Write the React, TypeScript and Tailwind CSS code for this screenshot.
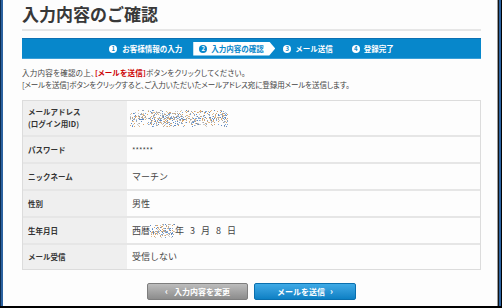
import React from 'react';

// deterministic noise used for the blurred-out personal data
const makeNoise = (w: number, h: number, seed: number) => {
  const colors = ['#7fa6d6', '#d9a46a', '#a7a7a7', '#c9c9c9', '#5f88c0', '#e0b98a'];
  const dots: { x: number; y: number; c: string }[] = [];
  let s = seed;
  const rnd = () => {
    s = (s * 1103515245 + 12345) % 2147483648;
    return s / 2147483648;
  };
  for (let y = 0; y < h; y++) {
    for (let x = 0; x < w; x++) {
      // denser in the middle band, thinner at the edges
      const edge = Math.min(y, h - 1 - y) / (h / 2);
      if (rnd() < 0.18 + edge * 0.32) {
        dots.push({ x, y, c: colors[Math.floor(rnd() * colors.length)] });
      }
    }
  }
  return dots;
};

const Noise: React.FC<{ w: number; h: number; seed: number }> = ({ w, h, seed }) => {
  const dots = makeNoise(w, h, seed);
  return (
    <svg width={w} height={h} viewBox={`0 0 ${w} ${h}`} className="shrink-0">
      {dots.map((d, i) => (
        <rect key={i} x={d.x} y={d.y} width="1" height="1" fill={d.c} />
      ))}
    </svg>
  );
};

const StepNum: React.FC<{ n: number; active?: boolean }> = ({ n, active }) => (
  <span
    className={`w-[8px] h-[8px] rounded-full flex items-center justify-center text-[6px] leading-none font-bold shrink-0 ${
      active ? 'bg-[#0787cb] text-white' : 'bg-white text-[#0787cb]'
    }`}
  >
    {n}
  </span>
);

// heights include the 2px separator line on top
const rows = [
  { label: ['メールアドレス', '(ログイン用ID)'], h: 'h-[34px]', value: 'email' },
  { label: ['パスワード'], h: 'h-[27px]', value: '******' },
  { label: ['ニックネーム'], h: 'h-[27px]', value: 'マーチン' },
  { label: ['性別'], h: 'h-[27px]', value: '男性' },
  { label: ['生年月日'], h: 'h-[27px]', value: 'birth' },
  { label: ['メール受信'], h: 'h-[26px]', value: '受信しない' },
];

export default function App() {
  return (
    <div className="w-[502px] h-[308px] bg-black flex flex-col font-['Noto_Sans_CJK_JP','Noto_Sans',sans-serif] text-[#333]">
      <div className="flex flex-1 min-h-0">
        {/* window frame, left */}
        <div className="w-px bg-[#0e2c50]" />
        <div className="w-[2px] bg-[#2b62a0]" />

        <main className="flex-1 bg-[#fdfdfd] pl-[19px] pr-[16px] flex flex-col">
          {/* Title */}
          <h1 className="mt-[5px] text-[17px] leading-[17px] font-bold text-[#383838]">入力内容のご確認</h1>
          <div className="mt-[7px] h-[2px] bg-[#e6e6e6]" />

          {/* Steps */}
          <div className="mt-[7px] h-[21px] bg-[#0787cb] border-t border-[#0b70b3] border-b border-b-[#3a9fd8] flex items-center justify-center text-white text-[7.5px] font-bold leading-none">
            <div className="flex items-center gap-[5px]">
              <StepNum n={1} />
              <span>お客様情報の入力</span>
            </div>
            <div className="ml-[11px] h-[14px] w-[82px] bg-white text-[#0787cb] flex items-center gap-[4px] pl-[6px] [clip-path:polygon(0_0,calc(100%_-_6px)_0,100%_50%,calc(100%_-_6px)_100%,0_100%)]">
              <StepNum n={2} active />
              <span>入力内容の確認</span>
            </div>
            <div className="ml-[8px] flex items-center gap-[4px]">
              <StepNum n={3} />
              <span>メール送信</span>
            </div>
            <div className="ml-[19px] flex items-center gap-[4px]">
              <StepNum n={4} />
              <span>登録完了</span>
            </div>
          </div>

          {/* Intro */}
          <div className="mt-[8px] text-[7.5px] leading-[12px] text-[#444] [font-feature-settings:'palt']">
            <p className="tracking-[0.25px]">
              入力内容を確認の上、<span className="text-[#cc0000] font-bold">[メールを送信]</span>ボタンをクリックしてください。
            </p>
            <p className="tracking-[-0.1px]">[メールを送信]ボタンをクリックすると、ご入力いただいたメールアドレス宛に登録用メールを送信します。</p>
          </div>

          {/* Table */}
          <div className="mt-[9px] border border-[#dcdcdc] flex flex-col">
            {rows.map((r, i) => (
              <div key={i} className={`flex ${r.h} ${i > 0 ? 'border-t-2 border-[#e6e6e6]' : ''}`}>
                <div className="w-[104px] bg-[#efefef] pl-[5px] flex flex-col justify-center text-[7.5px] leading-[12px] font-bold text-[#333]">
                  {r.label.map((l) => (
                    <span key={l}>{l}</span>
                  ))}
                </div>
                <div className="flex-1 bg-[#fdfdfd] pl-[5px] flex items-center text-[9px] text-[#444]">
                  {r.value === 'email' ? (
                    <div className="-ml-[2px]">
                      <Noise w={98} h={17} seed={7} />
                    </div>
                  ) : r.value === 'birth' ? (
                    <div className="flex items-center">
                      <span>西暦</span>
                      <Noise w={25} h={14} seed={31} />
                      <span className="flex items-center gap-[6px]">
                        <span>年</span>
                        <span>3</span>
                        <span>月</span>
                        <span>8</span>
                        <span>日</span>
                      </span>
                    </div>
                  ) : r.value === '******' ? (
                    <span className="text-[7.5px]">******</span>
                  ) : (
                    <span>{r.value}</span>
                  )}
                </div>
              </div>
            ))}
          </div>

          {/* Buttons */}
          <div className="mt-[13px] flex justify-center gap-[6px] text-white text-[8px] font-bold leading-none">
            <button className="w-[101px] h-[17px] rounded-[2px] border border-[#7e7e7e] bg-gradient-to-b from-[#bdbdbd] to-[#8c8c8c] flex items-center justify-center gap-[6px]">
              <span className="text-[9px]">‹</span>
              <span>入力内容を変更</span>
            </button>
            <button className="w-[102px] h-[17px] rounded-[2px] border border-[#0a6fae] bg-gradient-to-b from-[#3eaae6] to-[#0b80c4] flex items-center justify-center gap-[5px]">
              <span>メールを送信</span>
              <span className="text-[9px]">›</span>
            </button>
          </div>
        </main>

        {/* window frame, right */}
        <div className="w-px bg-[#9a9a9a]" />
        <div className="w-px bg-[#111]" />
        <div className="w-[2px] bg-[#2b62a0]" />
        <div className="w-px bg-black" />
      </div>
      <div className="h-[2px]" />
    </div>
  );
}
